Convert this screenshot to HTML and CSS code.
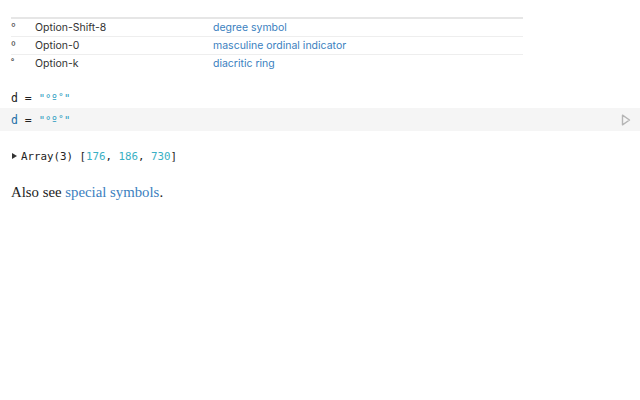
FILE: index.html
```html
<!DOCTYPE html>
<html>
<head>
<meta charset="utf-8">
<link rel="stylesheet" href="styles.css">
</head>
<body>
<div class="nb">
  <table class="keys">
    <tr><td class="sym">°</td><td class="combo">Option-Shift-8</td><td><a href="#">degree symbol</a></td></tr>
    <tr><td class="sym">º</td><td class="combo">Option-0</td><td><a href="#">masculine ordinal indicator</a></td></tr>
    <tr><td class="sym">˚</td><td class="combo">Option-k</td><td><a href="#">diacritic ring</a></td></tr>
  </table>
  <div class="code">d = <span class="str">"°º˚"</span></div>
</div>
<div class="editor">
  <div class="code"><span class="var">d</span> = <span class="str">"°º˚"</span></div>
  <svg class="play" width="10" height="12" viewBox="0 0 10 12"><path d="M1.5 1.2 L8.5 6 L1.5 10.8 Z" fill="none" stroke="#b5b5b5" stroke-width="1.4" stroke-linejoin="round"/></svg>
</div>
<div class="nb">
  <div class="out"><span class="caret"></span>Array(3) [<span class="num">176</span>, <span class="num">186</span>, <span class="num">730</span>]</div>
  <p class="prose">Also see <a href="#">special symbols</a>.</p>
</div>
</body>
</html>
```
FILE: styles.css
```css
body {
  margin: 0;
  background: #fff;
}
.nb {
  padding: 0 11px;
}
.keys {
  margin-top: 17px;
  width: 512px;
  border-collapse: collapse;
  border-top: 2px solid #e6e6e6;
  font-family: Inter, "Noto Sans", sans-serif;
  font-size: 10.5px;
  color: #333;
}
.keys td {
  height: 17px;
  padding: 0;
  border-bottom: 1px solid #eee;
  vertical-align: middle;
}
.keys tr:last-child td {
  border-bottom: none;
}
.keys .sym {
  width: 24px;
  color: #555;
}
.keys .combo {
  width: 178px;
}
.keys a {
  color: #3b7fc0;
  text-decoration: none;
}
.code {
  font-family: "DejaVu Sans Mono", monospace;
  font-size: 11.5px;
  color: #222;
  line-height: 14px;
}
.nb > .code {
  margin-top: 19px;
}
.str {
  color: #2a9cc0;
  font-size: 10.5px;
}
.var {
  color: #1e6fa8;
}
.editor {
  margin-top: 3px;
  background: #f5f5f5;
  height: 23px;
  display: flex;
  align-items: center;
  justify-content: space-between;
  padding: 0 9px 0 11px;
}
.play {
  display: block;
}
.out {
  margin-top: 19px;
  font-family: "DejaVu Sans Mono", monospace;
  font-size: 10.8px;
  color: #222;
  line-height: 14px;
  padding-left: 1px;
}
.caret {
  display: inline-block;
  width: 0;
  height: 0;
  border-top: 3px solid transparent;
  border-bottom: 3px solid transparent;
  border-left: 5px solid #333;
  margin-right: 4px;
  vertical-align: 1px;
}
.num {
  color: #3ab0c4;
}
.prose {
  margin: 20px 0 0;
  font-family: "Liberation Serif", serif;
  font-size: 14.8px;
  color: #222;
}
.prose a {
  color: #3b7fc0;
  text-decoration: none;
}
```
